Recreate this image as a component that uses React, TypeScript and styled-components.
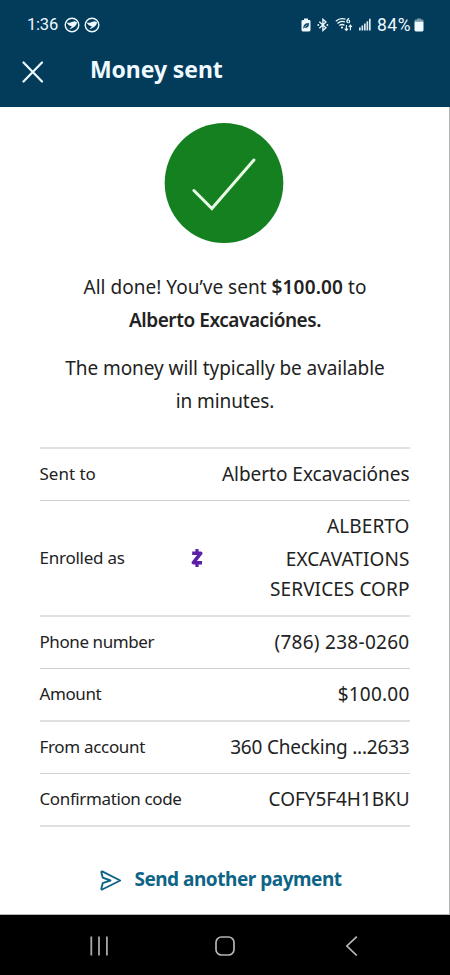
import React from "react";
import styled, { createGlobalStyle } from "styled-components";

const GlobalStyle = createGlobalStyle`
  * { box-sizing: border-box; }
  body { margin: 0; background: #fff; font-family: "Noto Sans", sans-serif; color: #222; }
  svg { display: block; flex: none; }
`;

const Screen = styled.div`
  width: 450px;
  height: 975px;
  display: flex;
  flex-direction: column;
  overflow: hidden;
`;

const Header = styled.header`
  height: 107px;
  flex: none;
  background: #033b5b;
  color: #eefaff;
`;

const StatusBar = styled.div`
  height: 49px;
  display: flex;
  align-items: center;
  padding: 0 26px 0 27px;
  font: 400 16.5px/20px Roboto, sans-serif;
`;

const StatusGroup = styled.div<{ $gap: number; $end?: boolean }>`
  display: flex;
  align-items: center;
  gap: ${(p) => p.$gap}px;
  margin-left: ${(p) => (p.$end ? "auto" : "0")};
`;

const Clock = styled.span`
  width: 33px;
  letter-spacing: -0.2px;
  white-space: nowrap;
`;

const Percent = styled.span`
  width: 36px;
  font-size: 17.5px;
  letter-spacing: 0.5px;
`;

const TitleBar = styled.div`
  height: 46px;
  display: flex;
  align-items: center;
  padding-left: 22px;
  gap: 46px;
`;

const CloseButton = styled.button`
  margin-top: -1px;
  padding: 0;
  border: 0;
  background: none;
  color: inherit;
`;

const Title = styled.h1`
  margin: -6px 0 0;
  font-size: 23px;
  line-height: 30px;
  font-weight: 700;
  letter-spacing: -0.1px;
`;

const Content = styled.main`
  flex: 1;
  border-right: 1px solid #b5b7b9;
  border-bottom: 1px solid #b5b7b9;
  background: #fff;
  display: flex;
  flex-direction: column;
  align-items: center;
  padding-top: 16px;
`;

const Message = styled.p<{ $top: number; $tracking: number }>`
  margin: ${(p) => p.$top}px 0 0;
  padding-left: 1px;
  font-size: 19px;
  line-height: 33px;
  text-align: center;
  letter-spacing: ${(p) => p.$tracking}px;
`;

const Strong = styled.strong<{ $tracking?: number }>`
  font-weight: 600;
  letter-spacing: ${(p) => p.$tracking ?? 0}px;
`;

const Details = styled.dl`
  width: 370px;
  margin: 29px 0 0;
  border-top: 2px solid #e0e0e0;
`;

const Row = styled.div<{ $height: number; $thin?: boolean }>`
  height: ${(p) => p.$height}px;
  display: flex;
  align-items: center;
  padding-bottom: 1px;
  border-bottom: ${(p) => (p.$thin ? "1px solid #d0d0d0" : "2px solid #e0e0e0")};
`;

const Label = styled.dt<{ $tracking: number }>`
  font-size: 17px;
  line-height: 26px;
  white-space: nowrap;
  letter-spacing: ${(p) => p.$tracking}px;
`;

const Value = styled.dd<{ $tracking: number }>`
  margin: 0 0 0 auto;
  font-size: 19px;
  line-height: 28px;
  text-align: right;
  white-space: nowrap;
  letter-spacing: ${(p) => p.$tracking}px;
`;

const EnrolledName = styled(Value)`
  display: grid;
  grid-template-rows: 34px 31px 30px;
  align-items: center;
  margin-bottom: 2px;
`;

const ZelleMark = styled.span`
  margin-left: 66px;
`;

const SendLink = styled.a`
  display: flex;
  align-items: center;
  gap: 12px;
  margin-top: 40px;
  margin-right: 7px;
  color: #0e6486;
  font-size: 19px;
  line-height: 28px;
  font-weight: 700;
  letter-spacing: -0.48px;
  white-space: nowrap;
`;

const LinkText = styled.span`
  margin-top: -2px;
`;

const NavBar = styled.nav`
  height: 60px;
  flex: none;
  background: #000;
  display: grid;
  grid-template-columns: 126px 130px 13px;
  align-items: center;
  padding: 1px 0 0 89px;
`;

const BirdIcon = () => (
  <svg width="16" height="16" viewBox="0 0 16 16">
    <circle cx="8" cy="8" r="6.8" fill="none" stroke="currentColor" strokeWidth="1.400" />
    <path d="M2.200 5.200Q5 6.400 7 5.200L10.500 4.200 13.200 5.200Q12.600 8.200 10.400 9.800L7 11.800 5.400 12 8 9.400 4.800 8.200Z" fill="currentColor" />
  </svg>
);

const SaverIcon = () => (
  <svg width="10" height="14" viewBox="0 0 10 14">
    <path d="M3 .6h4v1.300h1.200q1.300 0 1.300 1.300v8.900q0 1.300-1.300 1.300H1.800Q.5 13.400.5 12.100V3.200Q.5 1.900 1.800 1.900H3Z" fill="currentColor" />
    <path d="M2.300 10.200 3 7.200 5 5.600 8 5.300 7.300 8.400 5.400 9.700 3.700 9.500Z" fill="#033b5b" stroke="#033b5b" strokeWidth=".3" />
    <path d="M3.500 9 6.200 6.900" stroke="#eefaff" strokeWidth=".7" />
  </svg>
);

const BluetoothIcon = () => (
  <svg width="12" height="14" viewBox="0 0 12 14" fill="none" stroke="currentColor" strokeWidth="1.300">
    <path d="M2.300 3.800 9 9.800 5.900 12.500V1.300L9 4.100 2.300 10.200" />
    <circle cx="1.300" cy="7" r=".9" fill="currentColor" stroke="none" />
    <circle cx="10.400" cy="7" r=".9" fill="currentColor" stroke="none" />
  </svg>
);

const WifiIcon = () => (
  <svg width="18" height="15" viewBox="0 0 18 15" fill="none" stroke="currentColor" strokeWidth="1.300">
    <path d="M.8 4.200Q5.200.3 10.400 2.200M2.500 6.400Q6 3.300 10 5M4.400 8.500Q7 6.600 9.500 8.200" />
    <circle cx="7" cy="10.600" r="1.100" fill="currentColor" stroke="none" />
    <path d="M14.200 1.300Q11.900 2 11.900 4.400" strokeWidth="1.100" />
    <circle cx="13.300" cy="4.400" r="1.400" strokeWidth="1.100" />
    <path d="M11.400 8v5M9.700 11.600l1.700 1.800 1.700-1.800M15.400 13.200V8.200M13.800 10l1.600-1.800L17 10" strokeWidth="1.100" />
  </svg>
);

const SignalIcon = () => (
  <svg width="12" height="13" viewBox="0 0 12 13" fill="currentColor">
    <path d="M0 9.500h1.700V12.500H0ZM2.500 7.600h1.700v4.900H2.500ZM5 5.500h1.700v7H5ZM7.500 3.200h1.700v9.300H7.500ZM10 .7h1.700v11.800H10Z" opacity=".9" />
  </svg>
);

const BatteryIcon = () => (
  <svg width="10" height="14" viewBox="0 0 10 14">
    <path d="M3 .5h4v1h1.300Q9.500 1.500 9.500 2.800V4H.5V2.800Q.5 1.500 1.700 1.500H3Z" fill="#7b9bab" />
    <path d="M.5 3.800h9v8.300q0 1.300-1.300 1.300H1.800Q.5 13.400.5 12.100Z" fill="currentColor" />
  </svg>
);

const CloseIcon = () => (
  <svg width="22" height="22" viewBox="0 0 22 22" fill="none" stroke="currentColor" strokeWidth="2.200" strokeLinecap="round">
    <path d="M1.500 1.500 20 20.500M20 1.500 1.500 20.500" />
  </svg>
);

const SuccessIcon = () => (
  <svg width="121" height="120" viewBox="0 0 121 120">
    <ellipse cx="60" cy="60" rx="59.300" ry="60" fill="#148020" />
    <path d="M29.900 67.500 47.900 85.500 89.900 37" fill="none" stroke="#e9fbe6" strokeWidth="3" strokeLinecap="round" />
  </svg>
);

const ZelleIcon = () => (
  <svg width="12" height="20" viewBox="0 0 12 20" fill="none" stroke="#5c1fa8">
    <path d="M1.200 5.200H9.800L2.400 14.700H11" strokeWidth="3.500" strokeLinejoin="round" />
    <path d="M6 .9V4M6 15.500V19" strokeWidth="3.200" />
  </svg>
);

const SendIcon = () => (
  <svg width="22" height="21" viewBox="0 0 22 21" fill="none" stroke="currentColor" strokeWidth="1.900" strokeLinejoin="round" strokeLinecap="round">
    <path d="M2.200 1.400 20.200 10.500 2.200 19.500Q1.200 19.700 1.400 18.500L2.700 13.200 10.500 10.500 2.700 7.600 1.400 2.400Q1.200 1.100 2.200 1.400Z" />
  </svg>
);

const RecentsIcon = () => (
  <svg width="20" height="20" viewBox="0 0 20 20" stroke="#a8a8a8" strokeWidth="1.800">
    <path d="M2.300.5v19M10 .5v19M17.900.5v19" />
  </svg>
);

const HomeIcon = () => (
  <svg width="20" height="20" viewBox="0 0 20 20" fill="none" stroke="#b4b4b4" strokeWidth="1.700">
    <rect x="1" y="1" width="18" height="18" rx="5.500" />
  </svg>
);

const BackIcon = () => (
  <svg width="13" height="20" viewBox="0 0 13 20" fill="none" stroke="#b8b8b8" strokeWidth="1.700">
    <path d="M11.800.6 1.900 10l9.900 9.500" />
  </svg>
);

export default function App() {
  return (
    <Screen>
      <GlobalStyle />
      <Header>
        <StatusBar>
          <StatusGroup $gap={4}>
            <Clock>1:36</Clock>
            <BirdIcon />
            <BirdIcon />
          </StatusGroup>
          <StatusGroup $gap={6} $end>
            <SaverIcon />
            <BluetoothIcon />
            <WifiIcon />
            <StatusGroup $gap={6}>
              <SignalIcon />
              <StatusGroup $gap={1}>
                <Percent>84%</Percent>
                <BatteryIcon />
              </StatusGroup>
            </StatusGroup>
          </StatusGroup>
        </StatusBar>
        <TitleBar>
          <CloseButton aria-label="Close">
            <CloseIcon />
          </CloseButton>
          <Title>Money sent</Title>
        </TitleBar>
      </Header>

      <Content>
        <SuccessIcon />
        <Message $top={28} $tracking={0.02}>
          All done! You’ve sent <Strong $tracking={0.15}>$100.00</Strong> to
          <br />
          <Strong $tracking={-0.44}>Alberto Excavaciónes.</Strong>
        </Message>
        <Message $top={15} $tracking={-0.07}>
          The money will typically be available
          <br />
          in minutes.
        </Message>

        <Details>
          <Row $height={52} $thin>
            <Label $tracking={0}>Sent to</Label>
            <Value $tracking={-0.02}>Alberto Excavaciónes</Value>
          </Row>
          <Row $height={116}>
            <Label $tracking={-0.25}>Enrolled as</Label>
            <ZelleMark>
              <ZelleIcon />
            </ZelleMark>
            <EnrolledName $tracking={0.08}>
              <span>ALBERTO</span>
              <span>EXCAVATIONS</span>
              <span>SERVICES CORP</span>
            </EnrolledName>
          </Row>
          <Row $height={52} $thin>
            <Label $tracking={-0.42}>Phone number</Label>
            <Value $tracking={0.28}>(786) 238-0260</Value>
          </Row>
          <Row $height={53}>
            <Label $tracking={-0.4}>Amount</Label>
            <Value $tracking={0.22}>$100.00</Value>
          </Row>
          <Row $height={52} $thin>
            <Label $tracking={-0.32}>From account</Label>
            <Value $tracking={-0.2}>360 Checking ...2633</Value>
          </Row>
          <Row $height={53}>
            <Label $tracking={-0.38}>Confirmation code</Label>
            <Value $tracking={-0.06}>COFY5F4H1BKU</Value>
          </Row>
        </Details>

        <SendLink>
          <SendIcon />
          <LinkText>Send another payment</LinkText>
        </SendLink>
      </Content>

      <NavBar>
        <RecentsIcon />
        <HomeIcon />
        <BackIcon />
      </NavBar>
    </Screen>
  );
}
